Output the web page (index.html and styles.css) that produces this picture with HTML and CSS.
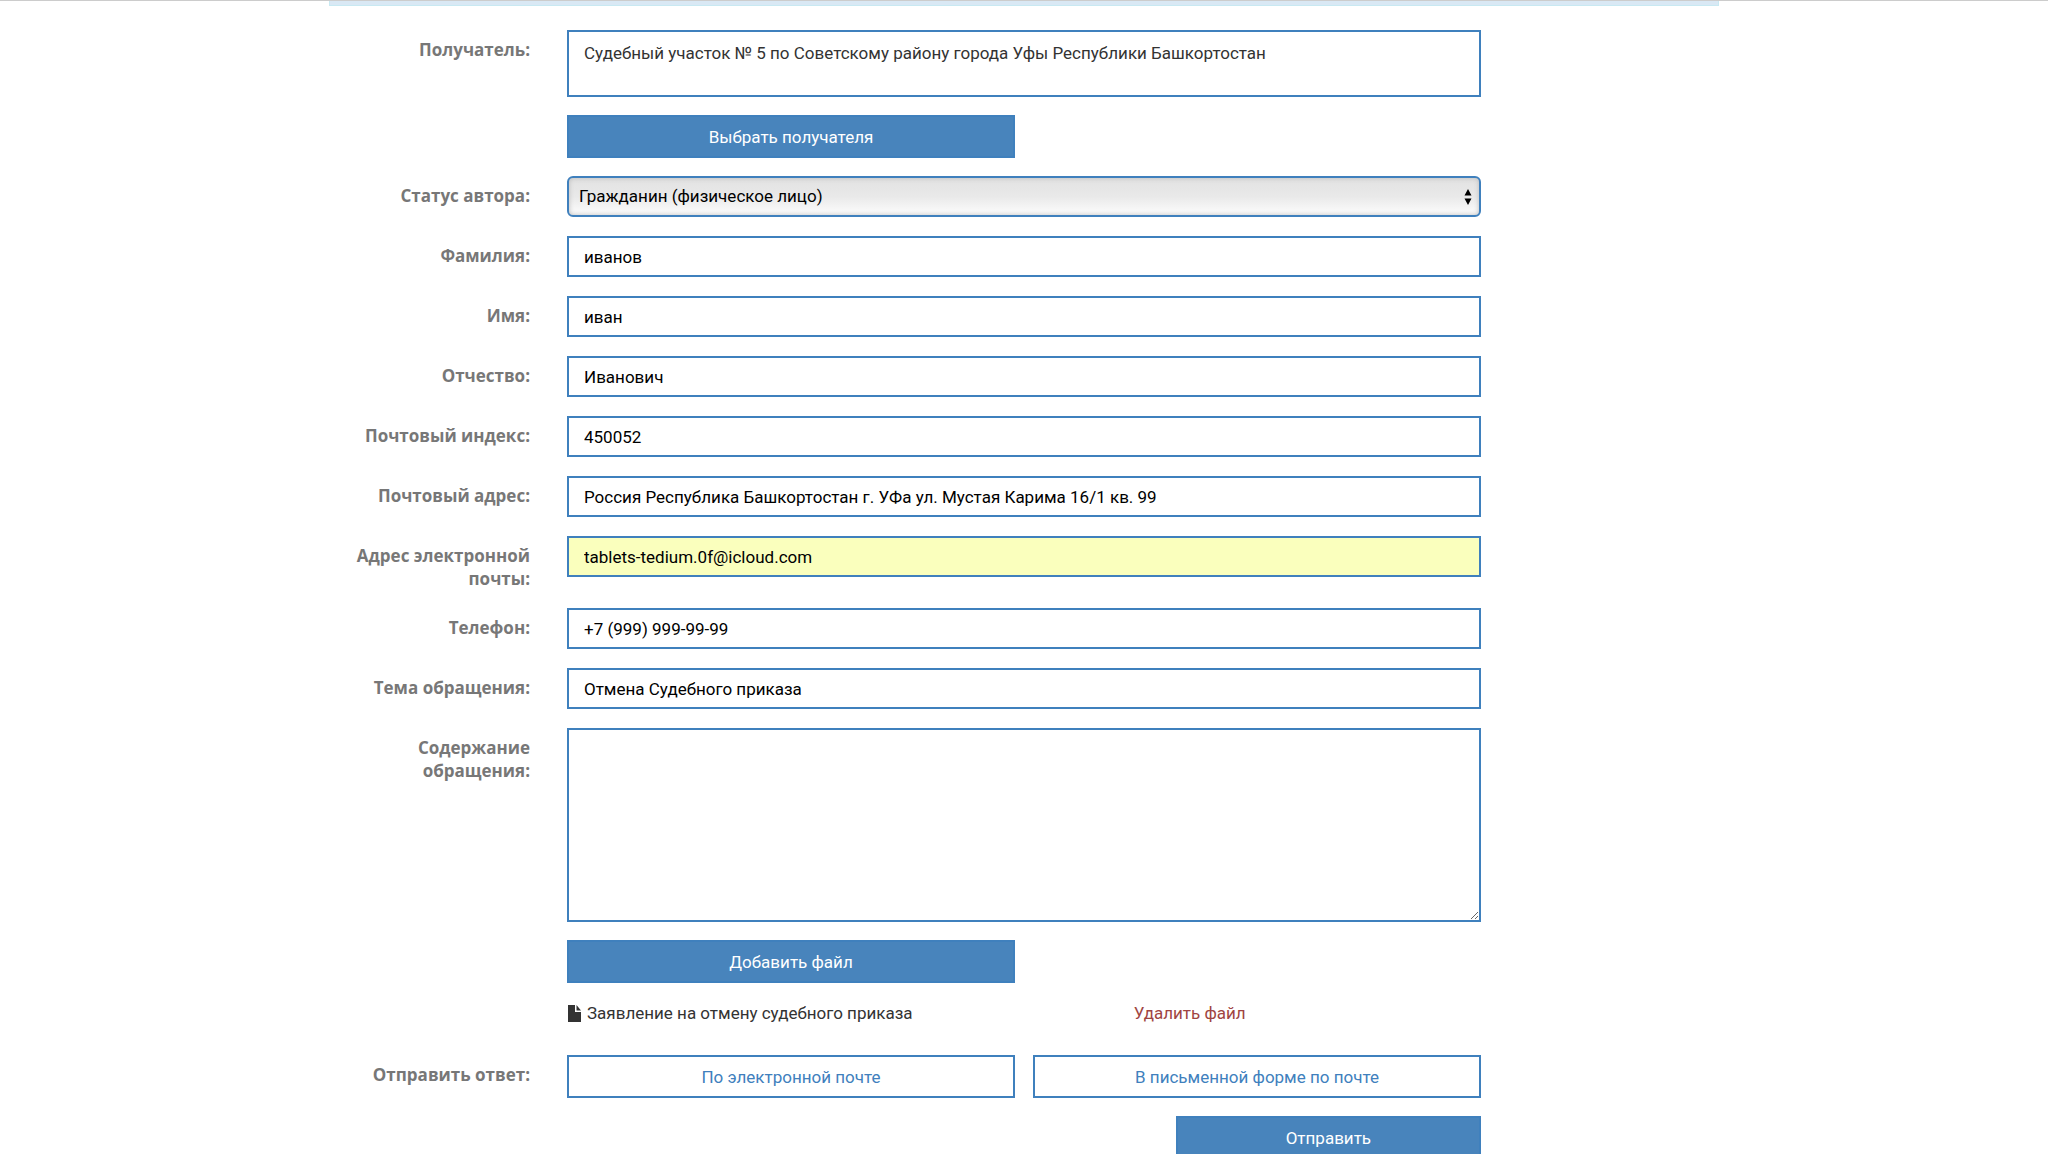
FILE: index.html
```html
<!DOCTYPE html>
<html lang="ru">
<head>
<meta charset="utf-8">
<meta name="viewport" content="width=device-width, initial-scale=1">
<title>Подача обращения</title>
<link rel="stylesheet" href="styles.css">
</head>
<body>
<main class="page">
  <div class="notice"></div>
  <form class="form">
    <div class="row">
      <label class="label" for="recipient">Получатель:</label>
      <div class="stack">
        <textarea class="control recipient" id="recipient" readonly>Судебный участок № 5 по Советскому району города Уфы Республики Башкортостан</textarea>
        <div class="halves"><button class="button" type="button">Выбрать получателя</button></div>
      </div>
    </div>
    <div class="row">
      <label class="label" for="status">Статус автора:</label>
      <div class="select-wrap">
        <select class="control select" id="status"><option>Гражданин (физическое лицо)</option></select>
        <svg class="arrows" viewBox="0 0 8 16" aria-hidden="true"><path d="M4 0 7.5 6.5h-7zM.5 9.500h7L4 16z"/></svg>
      </div>
    </div>
    <div class="row">
      <label class="label" for="surname">Фамилия:</label>
      <input class="control" id="surname" type="text" value="иванов">
    </div>
    <div class="row">
      <label class="label" for="name">Имя:</label>
      <input class="control" id="name" type="text" value="иван">
    </div>
    <div class="row">
      <label class="label" for="patronymic">Отчество:</label>
      <input class="control" id="patronymic" type="text" value="Иванович">
    </div>
    <div class="row">
      <label class="label" for="zip">Почтовый индекс:</label>
      <input class="control" id="zip" type="text" value="450052">
    </div>
    <div class="row">
      <label class="label" for="address">Почтовый адрес:</label>
      <input class="control" id="address" type="text" value="Россия Республика Башкортостан г. УФа ул. Мустая Карима 16/1 кв. 99">
    </div>
    <div class="row">
      <label class="label" for="email">Адрес электронной почты:</label>
      <input class="control filled" id="email" type="email" value="tablets-tedium.0f@icloud.com">
    </div>
    <div class="row">
      <label class="label" for="phone">Телефон:</label>
      <input class="control" id="phone" type="tel" value="+7 (999) 999-99-99">
    </div>
    <div class="row">
      <label class="label" for="subject">Тема обращения:</label>
      <input class="control" id="subject" type="text" value="Отмена Судебного приказа">
    </div>
    <div class="row">
      <label class="label" for="message">Содержание обращения:</label>
      <div class="stack">
        <textarea class="control message" id="message"></textarea>
        <div class="halves"><button class="button" type="button">Добавить файл</button></div>
        <div class="file">
          <span class="file-name"><svg class="file-icon" viewBox="0 0 14 17" aria-hidden="true"><path d="M1 0h7v7h6v10H1zM9.500 0 14 5.500H9.500z"/></svg>Заявление на отмену судебного приказа</span>
          <a class="remove" href="#">Удалить файл</a>
        </div>
      </div>
    </div>
    <div class="row" role="group" aria-labelledby="reply">
      <span class="label" id="reply">Отправить ответ:</span>
      <div class="stack">
        <div class="halves">
          <button class="button outline" type="button">По электронной почте</button>
          <button class="button outline" type="button">В письменной форме по почте</button>
        </div>
        <button class="button send" type="submit">Отправить</button>
      </div>
    </div>
  </form>
</main>
</body>
</html>
```
FILE: styles.css
```css
* {
  box-sizing: border-box;
}

body {
  margin: 0;
  border-top: 1px solid #ccc;
  background: #fff;
  color: #333;
  font: 17px/23px Roboto, "Open Sans", sans-serif;
}

.page {
  width: 68%;
  max-width: 1390px;
  margin: 0 auto;
}

.notice {
  height: 5px;
  border: 1px solid #c8e9f2;
  border-top: 0;
  background: #d9e8f4;
}

.form {
  display: flex;
  flex-direction: column;
  gap: 18px;
  padding: 24px 238px 18px 18px;
}

.row {
  display: grid;
  grid-template-columns: 183px minmax(0, 1fr);
  column-gap: 37px;
  align-items: start;
}

.label {
  padding-top: 8px;
  color: #777;
  font-family: "Open Sans", sans-serif;
  font-weight: 700;
  text-align: right;
}

.stack {
  display: flex;
  flex-direction: column;
  gap: 18px;
}

.control {
  display: block;
  width: 100%;
  height: 41px;
  margin: 0 0 1px;
  padding: 8px 15px;
  border: 2px solid #3f80bd;
  border-radius: 0;
  background: #fff;
  color: #000;
  font: inherit;
}

.recipient {
  height: 67px;
  margin: 0;
  padding-top: 10px;
  color: #333;
  resize: none;
}

.message {
  height: 194px;
  margin: 0;
  resize: vertical;
}

.filled {
  background: #faffbd;
}

.select-wrap {
  position: relative;
}

.select {
  padding: 0 30px 0 10px;
  border-radius: 6px;
  background: linear-gradient(#e2e2e2, #e9e9e9 50%, #fdfdfd);
  box-shadow: inset 0 0 5px #bbb;
  appearance: none;
}

.arrows {
  position: absolute;
  top: 13px;
  right: 9px;
  width: 8px;
  height: 16px;
  pointer-events: none;
}

.halves {
  display: grid;
  grid-template-columns: 1fr 1fr;
  gap: 18px;
}

.button {
  height: 43px;
  padding: 2px 15px 0;
  border: 2px solid #3f80bd;
  background: #4884bc;
  color: #fff;
  font: inherit;
  cursor: pointer;
}

.outline {
  background: #fff;
  color: #4080bd;
}

.send {
  align-self: flex-end;
  width: 33.4%;
}

.file {
  display: grid;
  grid-template-columns: 62% 1fr;
  padding-bottom: 12px;
  line-height: 24px;
}

.file-name {
  display: flex;
  align-items: center;
  gap: 6px;
}

.file-icon {
  width: 14px;
  height: 17px;
  fill: #333;
}

.remove {
  color: #a04442;
  text-decoration: none;
}
```
